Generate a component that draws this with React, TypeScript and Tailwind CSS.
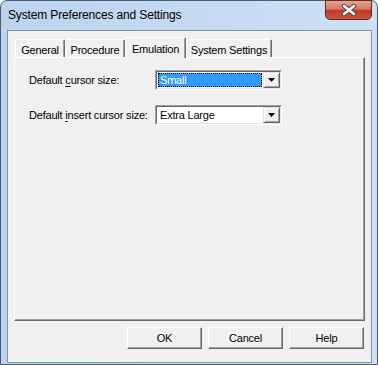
import React from 'react';

function Tab({ label, selected, width }: { label: string; selected?: boolean; width: string }) {
    if (selected) {
        return (
            <div className={`${width} relative z-10 -mb-[1px] flex h-[21px] items-start justify-center rounded-t-[2px] border-l border-t border-r border-l-white border-t-white border-r-[#696969] bg-[#f0f0f0] pt-[3px] shadow-[inset_-1px_0_0_#a0a0a0]`}>
                {label}
            </div>
        );
    }
    return (
        <div className={`${width} flex h-[18px] items-start justify-center rounded-t-[2px] border-l border-t border-r border-l-white border-t-white border-r-[#696969] bg-[#f0f0f0] pt-[2px] shadow-[inset_-1px_0_0_#a0a0a0]`}>
            {label}
        </div>
    );
}

function DropButton() {
    return (
        <div className="flex h-[16px] w-[17px] items-center justify-center border border-t-[#e3e3e3] border-l-[#e3e3e3] border-r-[#696969] border-b-[#696969] bg-[#f0f0f0] shadow-[inset_1px_1px_0_#ffffff,inset_-1px_-1px_0_#a0a0a0]">
            <svg width="7" height="4" viewBox="0 0 7 4">
                <path d="M0 0H7L3.5 4Z" fill="#000" />
            </svg>
        </div>
    );
}

function Combo({ value, focused }: { value: string; focused?: boolean }) {
    return (
        <div className="flex h-[20px] w-[127px] border border-t-[#a0a0a0] border-l-[#a0a0a0] border-r-white border-b-white">
            <div className="flex flex-1 border border-t-[#696969] border-l-[#696969] border-r-[#e3e3e3] border-b-[#e3e3e3] bg-white">
                <div className="flex flex-1 p-[1px]">
                    {focused ? (
                        <div className="flex flex-1 items-center border border-dotted border-black bg-[#3399ff] pl-[1px] text-white">{value}</div>
                    ) : (
                        <div className="flex flex-1 items-center pl-[2px]">{value}</div>
                    )}
                </div>
                <DropButton />
            </div>
        </div>
    );
}

function Button({ label }: { label: string }) {
    return (
        <div className="flex h-[22px] w-[75px] items-center justify-center border border-t-white border-l-white border-r-[#696969] border-b-[#696969] bg-[#f0f0f0] shadow-[inset_-1px_-1px_0_#a0a0a0]">
            {label}
        </div>
    );
}

export default function App() {
    return (
        <div className="h-[365px] w-[378px] font-['Liberation_Sans',Arial,sans-serif] text-[11px] tracking-[-0.2px] text-black">
            <div className="flex h-full flex-col rounded-t-[7px] border border-[#4b5b6d] bg-gradient-to-r from-[#bcd4ee] to-[#cde0f5] pb-[1px] pl-[6px] pr-[5px]">
                {/* title bar */}
                <div className="flex h-[29px] shrink-0 items-start justify-between">
                    <div className="pl-[1px] pt-[7px] text-[12px] leading-[15px] tracking-[-0.15px] text-black">System Preferences and Settings</div>
                    <div className="-mt-[1px] flex h-[20px] w-[47px] items-center justify-center rounded-b-[5px] border border-[#5e2a22] bg-[linear-gradient(to_bottom,#e6a596_0%,#d97664_45%,#c43a26_52%,#cc5240_100%)]">
                        <svg width="18" height="12" viewBox="0 0 18 12">
                            <path d="M4 2L14 10M14 2L4 10" stroke="#4a4a4a" strokeWidth="4.5" strokeLinecap="round" />
                            <path d="M4 2L14 10M14 2L4 10" stroke="#ffffff" strokeWidth="2.5" strokeLinecap="round" />
                        </svg>
                    </div>
                </div>

                {/* client area */}
                <div className="flex flex-1 flex-col border border-[#8394a8] bg-[#f0f0f0] px-[6px] pt-[6px]">
                    <div className="flex h-[20px] items-end pl-[1px]">
                        <Tab label="General" width="w-[50px]" />
                        <Tab label="Procedure" width="w-[60px]" />
                        <Tab label="Emulation" width="w-[61px]" selected />
                        <Tab label="System Settings" width="w-[86px]" />
                    </div>

                    <div className="h-[264px] border border-t-white border-l-white border-r-[#696969] border-b-[#696969] pl-[14px] pt-[12px] shadow-[inset_-1px_-1px_0_#a0a0a0]">
                        <div className="grid grid-cols-[126px_127px] gap-y-[15px]">
                            <div className="flex items-center">
                                Default&nbsp;<span className="underline underline-offset-[2px]">c</span>ursor size:
                            </div>
                            <Combo value="Small" focused />
                            <div className="flex items-center">
                                Default&nbsp;<span className="underline underline-offset-[2px]">i</span>nsert cursor size:
                            </div>
                            <Combo value="Extra Large" />
                        </div>
                    </div>

                    <div className="mt-[6px] flex justify-end gap-[6px] pr-[1px]">
                        <Button label="OK" />
                        <Button label="Cancel" />
                        <Button label="Help" />
                    </div>
                </div>
            </div>
        </div>
    );
}
